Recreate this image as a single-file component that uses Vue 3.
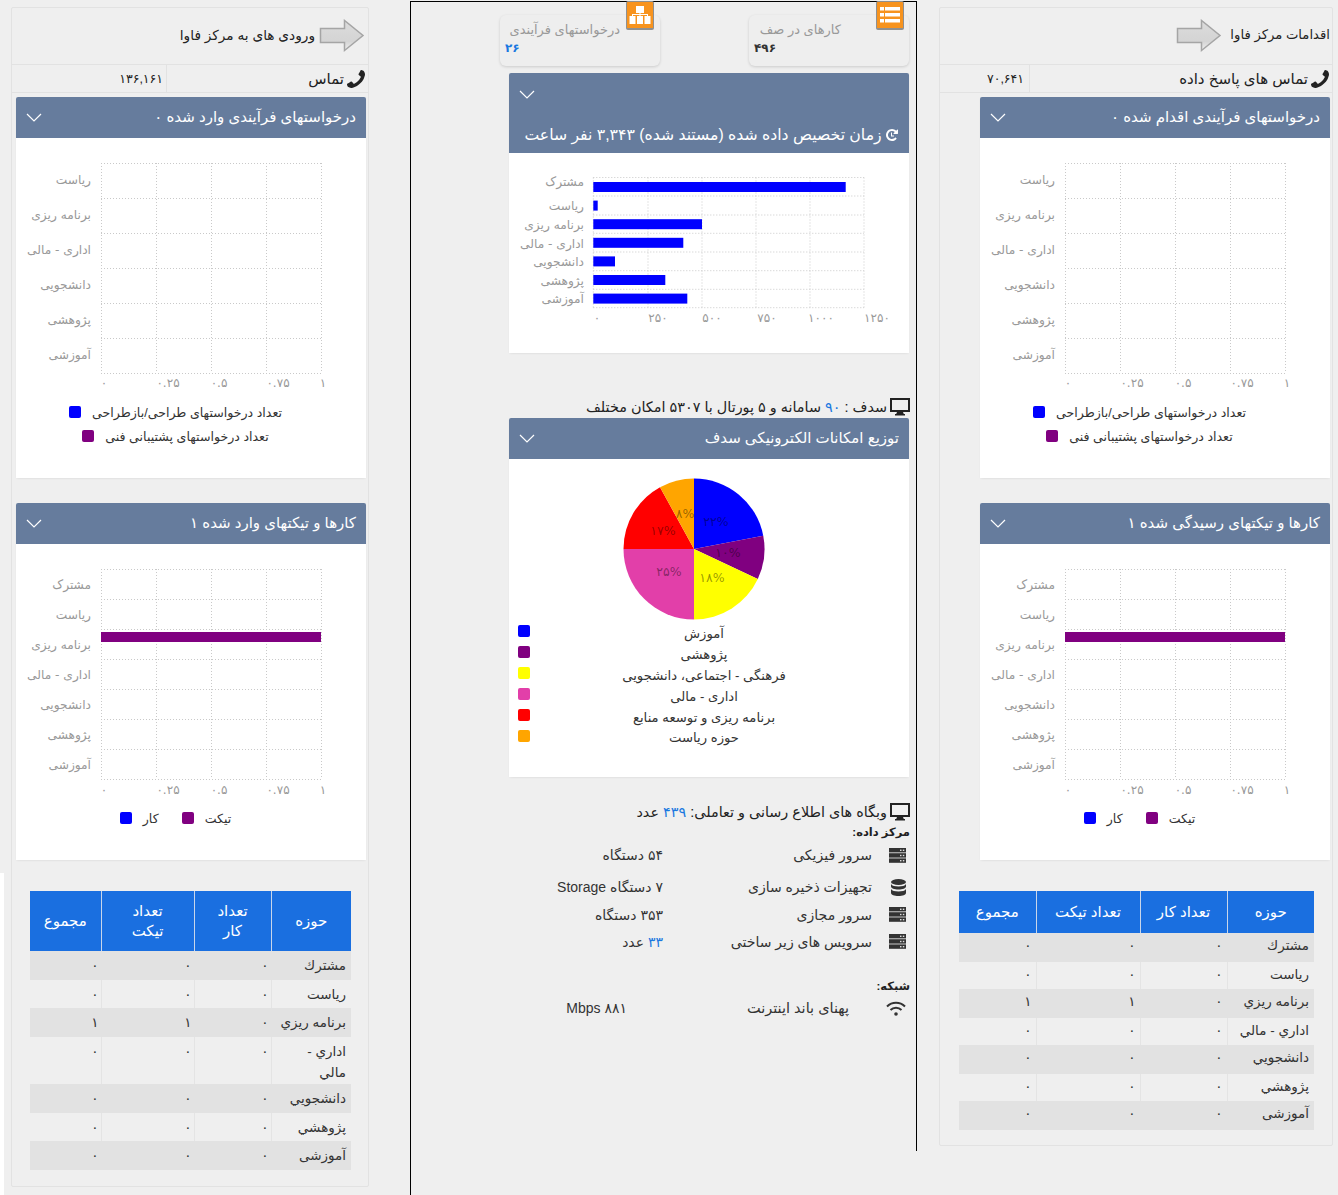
<script setup>
const fa = ['مشترک', 'ریاست', 'برنامه ریزی', 'اداری - مالی', 'دانشجویی', 'پژوهشی', 'آموزشی']
const ticksHeader = ['حوزه', 'تعداد کار', 'تعداد تیکت', 'مجموع']
const tableRows = [
  { name: 'مشترك', v: ['۰', '۰', '۰'] },
  { name: 'رياست', v: ['۰', '۰', '۰'] },
  { name: 'برنامه ريزي', v: ['۰', '۱', '۱'] },
  { name: 'اداري - مالي', v: ['۰', '۰', '۰'] },
  { name: 'دانشجويي', v: ['۰', '۰', '۰'] },
  { name: 'پژوهشي', v: ['۰', '۰', '۰'] },
  { name: 'آموزشی', v: ['۰', '۰', '۰'] }
]
const xTicks = [
  { t: '۰', x: 88 }, { t: '۰.۲۵', x: 152 }, { t: '۰.۵', x: 203 }, { t: '۰.۷۵', x: 262 }, { t: '۱', x: 307 }
]
const gridX = [85, 140, 195, 250, 305]
function range(start, step, n) {
  return Array.from({ length: n }, (_, i) => start + step * i)
}
const chartA = {
  height: 257,
  gridY: range(25, 35, 7),
  labels: fa.slice(1).map((t, i) => ({ t, y: 42 + i * 35 })),
  tickY: 245,
  bar: null,
  legend: [
    [{ c: '#0000ff', t: 'تعداد درخواستهای طراحی/بازطراحی' }],
    [{ c: '#800080', t: 'تعداد درخواستهای پشتیبانی فنی' }]
  ]
}
const chartB = {
  height: 257,
  gridY: range(25, 30, 8),
  labels: fa.map((t, i) => ({ t, y: 41 + i * 30.1 })),
  tickY: 246,
  bar: { y: 88, h: 10 },
  legend: [[{ c: '#0000ff', t: 'کار' }, { c: '#800080', t: 'تیکت' }]]
}
const sides = [
  {
    key: 'left',
    title: 'ورودی های به مرکز فاوا',
    phone: 'تماس',
    phoneValue: '۱۳۶,۱۶۱',
    cards: [
      { title: 'درخواستهای فرآیندی وارد شده ۰', chart: chartA },
      { title: 'کارها و تیکتهای وارد شده ۱', chart: chartB }
    ]
  },
  {
    key: 'right',
    title: 'اقدامات مرکز فاوا',
    phone: 'تماس های پاسخ داده',
    phoneValue: '۷۰,۶۴۱',
    cards: [
      { title: 'درخواستهای فرآیندی اقدام شده ۰', chart: chartA },
      { title: 'کارها و تیکتهای رسیدگی شده ۱', chart: chartB }
    ]
  }
]
const hBars = [
  { t: 'مشترک', w: 252.4, ly: 29 }, { t: 'ریاست', w: 4.4, ly: 53 }, { t: 'برنامه ریزی', w: 108.7, ly: 72 },
  { t: 'اداری - مالی', w: 90, ly: 91 }, { t: 'دانشجویی', w: 21.7, ly: 109 }, { t: 'پژوهشی', w: 72, ly: 128 },
  { t: 'آموزشی', w: 94, ly: 146 }
]
const hGridY = [24.5, 43, 62, 80.3, 99, 117.7, 136.3, 154.7]
const hGridX = [84.3, 139, 193, 247, 301, 355]
const hTicks = [
  { t: '۰', x: 88 }, { t: '۲۵۰', x: 149 }, { t: '۵۰۰', x: 203 }, { t: '۷۵۰', x: 258 }, { t: '۱۰۰۰', x: 312 }, { t: '۱۲۵۰', x: 368 }
]
const slices = [
  { p: 22, c: '#0000ff', lx: 22, ly: -27, lb: '۲۲%', name: 'آموزش' },
  { p: 10, c: '#800080', lx: 34, ly: 4, lb: '۱۰%', name: 'پژوهشی' },
  { p: 18, c: '#ffff00', lx: 18, ly: 29, lb: '۱۸%', name: 'فرهنگی - اجتماعی، دانشجویی' },
  { p: 25, c: '#e23fa9', lx: -25, ly: 23, lb: '۲۵%', name: 'اداری - مالی' },
  { p: 17, c: '#ff0000', lx: -31, ly: -18, lb: '۱۷%', name: 'برنامه ریزی و توسعه منابع' },
  { p: 8, c: '#ffa500', lx: -9, ly: -35, lb: '۸%', name: 'حوزه ریاست' }
]
const R = 70.5
let acc = 0
const pie = slices.map((s) => {
  const a0 = (acc / 100) * 2 * Math.PI - Math.PI / 2
  acc += s.p
  const a1 = (acc / 100) * 2 * Math.PI - Math.PI / 2
  const large = s.p > 50 ? 1 : 0
  const d = `M0 0L${R * Math.cos(a0)} ${R * Math.sin(a0)}A${R} ${R} 0 ${large} 1 ${R * Math.cos(a1)} ${R * Math.sin(a1)}Z`
  return { ...s, d }
})
const infoRows = [
  { icon: 'server', label: 'سرور فیزیکی', value: '۵۴ دستگاه', h: 'r1' },
  { icon: 'db', label: 'تجهیزات ذخیره سازی', value: '۷ دستگاه Storage', h: 'r2' },
  { icon: 'server', label: 'سرور مجازی', value: '۳۵۳ دستگاه', h: 'r3' },
  { icon: 'server', label: 'سرویس های زیر ساختی', blue: '۳۳', value: ' عدد', h: 'r3' }
]
const phonePath = 'M1408 1112q0 27-10 70.5t-21 68.5q-21 50-122 106-94 51-186 51-27 0-53-3.5t-57.5-12.5-47-14.5-55.5-20.5-49-18q-98-35-175-83-127-79-264-216t-216-264q-48-77-83-175-3-9-18-49t-20.5-55.5-14.5-47-12.5-57.5-3.5-53q0-92 51-186 56-101 106-122 25-11 68.5-21t70.5-10q14 0 21 3 18 6 53 76 11 19 30 54t35 63.5 31 53.5q3 4 17.5 25t21.5 35.5 7 28.5q0 20-28.5 50t-62 55-62 53-28.5 46q0 9 5 22.5t8.5 20.5 14 24 11.5 19q76 137 174 235t235 174q2 1 19 11.5t24 14 20.5 8.5 22.5 5q18 0 46-28.5t53-62 55-62 50-28.5q14 0 28.5 7t35.5 21.5 25 17.5q25 15 53.5 31t63.5 35 54 30q70 35 76 53 3 7 3 21z'
const historyPath = 'M1536 768q0 156-61 298t-164 245-245 164-298 61q-172 0-327-72.5T177 1259q-7-10-6.500-22.500t8.500-20.500l137-138q10-9 25-9 16 2 23 12 73 95 179 147t225 52q104 0 198.500-40.500T1131 1131t109.500-163.500T1281 768t-40.500-198.500T1131 405 967.500 295.500 769 255q-98 0-188 35.500T421 392l137 138q31 30 14 69-17 40-59 40H65q-26 0-45-19t-19-45V127q0-42 40-59 39-17 69 14l130 129q107-101 244.500-156.500T769 0q156 0 298 61t245 164 164 245 61 298zM896 480v448q0 14-9 23t-23 9H544q-14 0-23-9t-9-23v-64q0-14 9-23t23-9h224V480q0-14 9-23t23-9h64q14 0 23 9t9 23z'
</script>

<template>
  <div class="page">
    <section v-for="side in sides" :key="side.key" class="side" :class="side.key">
      <div class="side-title">
        <span class="side-text">{{ side.title }}</span>
        <svg class="arrow" width="46" height="34" viewBox="0 0 46 34">
          <defs>
            <linearGradient :id="'ag' + side.key" x1="0" y1="0" x2="0" y2="1">
              <stop offset="0" stop-color="#dcdcdc" />
              <stop offset="0.7" stop-color="#d4d4d4" />
              <stop offset="1" stop-color="#f0f0f0" />
            </linearGradient>
          </defs>
          <path d="M1.500 9.500H25.500V1.500L44 16.500 25.500 31.500V23.500H1.500Z" :fill="'url(#ag' + side.key + ')'" stroke="#a5a5a5" stroke-width="1.500" />
        </svg>
      </div>
      <div class="phone-row">
        <div class="phone-label">
          <svg class="phone-icon" width="18" height="18" viewBox="0 0 1408 1408"><path :d="phonePath" fill="#222" /></svg>
          <span>{{ side.phone }}</span>
        </div>
        <div class="phone-value">{{ side.phoneValue }}</div>
      </div>

      <article v-for="card in side.cards" :key="card.title" class="card">
        <header class="card-head">
          <span class="card-title">{{ card.title }}</span>
          <svg class="chev" width="16" height="9" viewBox="0 0 16 9"><path d="M1 1l7 7 7-7" fill="none" stroke="#fff" stroke-width="1.200" /></svg>
        </header>
        <div class="card-body">
          <svg class="chart" width="350" :height="card.chart.height" :viewBox="`0 0 350 ${card.chart.height}`">
            <line v-for="x in gridX" :key="'x' + x" :x1="x + 0.5" :x2="x + 0.5" :y1="card.chart.gridY[0]" :y2="card.chart.gridY[card.chart.gridY.length - 1]" class="grid" />
            <line v-for="y in card.chart.gridY" :key="'y' + y" x1="85" x2="305" :y1="y + 0.5" :y2="y + 0.5" class="grid" />
            <rect v-if="card.chart.bar" x="85" :y="card.chart.bar.y" width="220" :height="card.chart.bar.h" fill="#800080" />
            <text v-for="l in card.chart.labels" :key="l.t" x="75" :y="l.y" class="axis" text-anchor="end" dominant-baseline="middle">{{ l.t }}</text>
            <text v-for="t in xTicks" :key="t.t" :x="t.x" :y="card.chart.tickY" class="axis tick" text-anchor="middle" dominant-baseline="middle">{{ t.t }}</text>
          </svg>
          <div class="legend" :class="{ single: card.chart.legend.length === 1 }">
            <div v-for="(row, i) in card.chart.legend" :key="i" class="legend-row">
              <span v-for="it in row" :key="it.t" class="legend-item">
                <i class="swatch" :style="{ background: it.c }"></i>
                <span>{{ it.t }}</span>
              </span>
            </div>
          </div>
        </div>
      </article>

      <table class="data">
        <thead>
          <tr><th v-for="h in ticksHeader" :key="h">{{ h }}</th></tr>
        </thead>
        <tbody>
          <tr v-for="r in tableRows" :key="r.name">
            <td class="name">{{ r.name }}</td>
            <td v-for="(v, i) in r.v" :key="i">{{ v }}</td>
          </tr>
        </tbody>
      </table>
    </section>

    <main class="center">
      <div class="center-inner">
        <div class="stats">
          <div class="stat">
            <div class="stat-badge b1">
              <svg width="22" height="20" viewBox="0 0 22 20" fill="#fff">
                <rect x="7" y="1" width="8" height="7" />
                <rect x="0.500" y="11" width="6" height="8" />
                <rect x="8" y="11" width="6" height="8" />
                <rect x="15.500" y="11" width="6" height="8" />
                <path d="M3 11V9h16v2h-1V10H4v1zM10.500 8h1v3h-1z" />
              </svg>
            </div>
            <div class="stat-title t1">درخواستهای فرآیندی</div>
            <div class="stat-value blue">۲۶</div>
          </div>
          <div class="stat">
            <div class="stat-badge">
              <svg width="20" height="18" viewBox="0 0 20 18" fill="#fff">
                <rect x="0" y="1" width="4" height="3.500" /><rect x="5" y="1" width="15" height="3.500" />
                <rect x="0" y="7" width="4" height="3.500" /><rect x="5" y="7" width="15" height="3.500" />
                <rect x="0" y="13" width="4" height="3.500" /><rect x="5" y="13" width="15" height="3.500" />
              </svg>
            </div>
            <div class="stat-title t2">کارهای در صف</div>
            <div class="stat-value">۴۹۶</div>
          </div>
        </div>

        <article class="card wide">
          <header class="card-head tall">
            <svg class="chev" width="16" height="9" viewBox="0 0 16 9"><path d="M1 1l7 7 7-7" fill="none" stroke="#fff" stroke-width="1.200" /></svg>
            <div class="card-title tall-title">
              <svg class="hist" width="12" height="12" viewBox="0 0 1536 1536"><path :d="historyPath" fill="#fff" /></svg>
              زمان تخصیص داده شده (مستند شده) ۳,۳۴۳ نفر ساعت
            </div>
          </header>
          <div class="card-body h200">
            <svg class="chart" width="400" height="200" viewBox="0 0 400 200">
              <line v-for="x in hGridX" :key="x" :x1="x" :x2="x" y1="24.500" y2="154.700" class="grid" />
              <line v-for="y in hGridY" :key="y" x1="84.300" x2="355" :y1="y" :y2="y" class="grid" />
              <rect v-for="(b, i) in hBars" :key="b.t" x="84.300" :y="29 + i * 18.600" :width="b.w" height="10" fill="#0000ff" />
              <text v-for="b in hBars" :key="b.t + 'l'" x="75" :y="b.ly" class="axis" text-anchor="end" dominant-baseline="middle">{{ b.t }}</text>
              <text v-for="t in hTicks" :key="t.t" :x="t.x" y="165" class="axis tick" text-anchor="middle" dominant-baseline="middle">{{ t.t }}</text>
            </svg>
          </div>
        </article>

        <div class="line sadaf">
          <svg class="mon" width="20" height="18" viewBox="0 0 20 18"><path d="M1 1h18v12H1z" fill="none" stroke="#222" stroke-width="2" /><path d="M7 14h6l1 2.500H6zM5 16h10v1.500H5z" fill="#222" /></svg>
          <span>سدف : <b class="blue">۹۰</b> سامانه و ۵ پورتال با ۵۳۰۷ امکان مختلف</span>
        </div>

        <article class="card wide">
          <header class="card-head">
            <span class="card-title">توزیع امکانات الکترونیکی سدف</span>
            <svg class="chev" width="16" height="9" viewBox="0 0 16 9"><path d="M1 1l7 7 7-7" fill="none" stroke="#fff" stroke-width="1.200" /></svg>
          </header>
          <div class="card-body h318">
            <svg class="pie" width="142" height="142" viewBox="-71 -71 142 142">
              <path v-for="s in pie" :key="s.c" :d="s.d" :fill="s.c" />
              <text v-for="s in pie" :key="s.lb" :x="s.lx" :y="s.ly" class="pie-label" text-anchor="middle" dominant-baseline="middle">{{ s.lb }}</text>
            </svg>
            <ul class="pie-legend">
              <li v-for="s in slices" :key="s.name">
                <i class="swatch" :style="{ background: s.c }"></i>
                <span>{{ s.name }}</span>
              </li>
            </ul>
          </div>
        </article>

        <div class="info">
          <div class="line site">
            <svg class="mon" width="20" height="18" viewBox="0 0 20 18"><path d="M1 1h18v12H1z" fill="none" stroke="#222" stroke-width="2" /><path d="M7 14h6l1 2.500H6zM5 16h10v1.500H5z" fill="#222" /></svg>
            <span>وبگاه های اطلاع رسانی و تعاملی: <b class="blue">۴۳۹</b> عدد</span>
          </div>
          <div class="info-head">مرکز داده:</div>
          <div v-for="r in infoRows" :key="r.label" class="info-row" :class="r.h">
            <span class="info-icon">
              <svg v-if="r.icon === 'server'" width="17" height="15" viewBox="0 0 17 15">
                <g v-for="y in [0, 5.200, 10.400]" :key="y">
                  <rect :y="y" width="17" height="4.400" fill="#333" />
                  <rect x="11" :y="y + 1.600" width="1.500" height="1.400" fill="#ddd" />
                  <rect x="13.800" :y="y + 1.600" width="1.500" height="1.400" fill="#ddd" />
                </g>
              </svg>
              <svg v-else width="15" height="17" viewBox="0 0 15 17" fill="#333">
                <ellipse cx="7.500" cy="3" rx="7.500" ry="3" />
                <path d="M0 5c1 1.800 4 2.500 7.500 2.500S14 6.800 15 5v2.500c0 1.700-3.400 3-7.500 3S0 9.200 0 7.500z" />
                <path d="M0 10c1 1.800 4 2.500 7.500 2.500S14 11.800 15 10v4c0 1.700-3.400 3-7.500 3S0 15.700 0 14z" />
              </svg>
            </span>
            <span class="info-label">{{ r.label }}</span>
            <span class="info-value"><b v-if="r.blue" class="blue">{{ r.blue }}</b>{{ r.value }}</span>
          </div>
          <div class="info-head net">شبکه:</div>
          <div class="info-row netrow">
            <span class="info-icon">
              <svg width="20" height="15" viewBox="0 0 20 15" fill="none" stroke="#333" stroke-width="2">
                <path d="M1 5.500C6 .5 14 .5 19 5.500" />
                <path d="M4.500 9C7.500 6 12.500 6 15.500 9" />
                <circle cx="10" cy="13" r="1.800" fill="#333" stroke="none" />
              </svg>
            </span>
            <span class="info-label">پهنای باند اینترنت</span>
            <span class="info-value">۸۸۱ Mbps</span>
          </div>
        </div>
      </div>
    </main>
  </div>
</template>

<style>
html, body { margin: 0; background: #efefef; }
</style>

<style scoped>
.page {
  position: relative;
  display: flex;
  align-items: flex-start;
  width: 1338px;
  height: 1195px;
  overflow: hidden;
  background: #efefef;
  color: #333;
  font-family: "Liberation Sans", "DejaVu Sans", sans-serif;
  font-size: 13px;
}
.page::before {
  content: "";
  position: absolute;
  left: 0;
  top: 873px;
  bottom: 0;
  width: 4px;
  background: #fff;
}
.side {
  box-sizing: border-box;
  margin-top: 7px;
  border: 1px solid #e2e2e2;
  border-radius: 2px;
  display: flex;
  flex-direction: column;
  align-items: flex-end;
}
.side > * { flex: none; }
.left { order: 1; width: 358px; margin-left: 11px; height: 1180px; padding-right: 2px; }
.right { order: 3; width: 394px; margin-left: 22px; height: 1139px; padding-right: 2px; }
.center { order: 2; margin-left: 41px; }

.side-title {
  height: 56px;
  display: flex;
  align-items: center;
  gap: 4px;
  direction: ltr;
  font-size: 13.700px;
  color: #222;
}
.side-text { margin-bottom: 3px; }
.left .side-title { padding-right: 1px; }
.left .side-text { order: 1; }
.left .arrow { order: 2; }
.right .side-title { flex-direction: row-reverse; gap: 8px; font-size: 13.200px; }

.phone-row {
  box-sizing: border-box;
  align-self: stretch;
  margin-right: -2px;
  height: 29px;
  display: flex;
  direction: rtl;
  border-top: 1px solid #e2e2e2;
  border-bottom: 1px solid #e2e2e2;
  align-items: stretch;
  font-size: 15px;
}
.phone-label {
  flex: 1;
  display: flex;
  align-items: center;
  gap: 3px;
  padding-right: 3px;
  border-left: 1px solid #e2e2e2;
  color: #222;
}
.phone-icon { transform: scaleX(-1); }
.phone-value {
  box-sizing: border-box;
  display: flex;
  align-items: center;
  justify-content: flex-start;
  padding-right: 3px;
  width: 154px;
  color: #222;
  font-size: 12.500px;
}
.right .phone-value { width: 89px; padding-right: 5px; }

.card { width: 350px; margin-top: 4px; background: #fff; border-radius: 3px; box-shadow: 0 1px 2px rgba(0, 0, 0, .06); direction: ltr; }
.side .card + .card { margin-top: 25px; }
.side .card:nth-of-type(1) { margin-top: 4px; }
.card-head {
  height: 41px;
  background: #667c9d;
  display: flex;
  align-items: center;
  justify-content: space-between;
  flex-direction: row-reverse;
  padding: 0 10px;
  color: #fff;
  border-radius: 2px 2px 0 0;
}
.card-title { direction: rtl; font-size: 15px; margin-bottom: 2px; }
.chev { display: block; }
.card-body { background: #fff; position: relative; }
.side .card:nth-of-type(1) .card-body { height: 340px; }
.side .card:nth-of-type(2) .card-body { height: 316px; }
.chart { display: block; }
.grid { stroke: #c9c9c9; stroke-width: 1; stroke-dasharray: 1 2; }
.axis { fill: #999; font-size: 12.200px; font-family: "DejaVu Sans", sans-serif; }
.tick { font-size: 12px; }
.legend { padding-right: 31px; margin-top: 5px; }
.legend-row { display: flex; justify-content: center; gap: 23px; height: 24px; align-items: center; }
.legend-item { display: flex; align-items: center; gap: 11px; direction: rtl; flex-direction: row-reverse; color: #333; font-size: 12.600px; }
.swatch { display: block; width: 12px; height: 12px; border-radius: 2px; flex: none; }

.data {
  margin-top: 31px;
  border-collapse: collapse;
  direction: rtl;
  table-layout: fixed;
  font-size: 13.500px;
  color: #333;
}
.left .data { width: 321px; margin-right: 15px; }
.right .data { width: 355px; margin-right: 16px; }
.data th {
  background: #1a6fe0;
  color: #fff;
  font-weight: 400;
  font-size: 15px;
  line-height: 20px;
  border-left: 1px solid #c9d6ea;
  text-align: center;
  padding: 0 15px;
  box-sizing: border-box;
}
.data th:last-child { border-left: 0; padding: 0 4px; }
.left .data thead tr { height: 60px; }
.right .data thead tr { height: 42px; }
.left th:nth-child(1) { width: 80px; }
.left th:nth-child(2) { width: 77px; }
.left th:nth-child(3) { width: 93px; }
.right th:nth-child(1) { width: 87px; }
.right th:nth-child(2) { width: 87px; }
.right th:nth-child(3) { width: 104px; }
.data td {
  vertical-align: top;
  text-align: right;
  padding: 2px 4px 0;
  line-height: 21px;
  border-left: 1px solid #e4e4e4;
  box-sizing: border-box;
  height: 27px;
}
.left .data td { padding-right: 2px; padding-top: 4px; padding-bottom: 1.500px; height: 27.500px; }
.data td:last-child { border-left: 0; }
.data td.name { padding-right: 5px; }
.left .data td.name { padding-right: 5px; padding-left: 8px; }
.data tbody tr:nth-child(odd) td { background: #e2e2e2; border-left-color: #e2e2e2; height: 29px; }

.center {
  box-sizing: border-box;
  width: 507px;
  height: 1194px;
  margin-top: 1px;
  border-left: 1px solid #000;
  border-top: 1px solid #000;
}
.center-inner {
  box-sizing: border-box;
  height: 1149px;
  border-right: 1px solid #000;
  padding-left: 98px;
  padding-right: 6px;
  direction: ltr;
}
.stats {
  display: flex;
  margin-left: -9px;
  justify-content: space-between;
  padding-top: 13px;
  margin-right: 1px;
}
.stat {
  position: relative;
  box-sizing: border-box;
  width: 160px;
  height: 51px;
  background: #eeeeee;
  border-radius: 6px;
  box-shadow: 0 1px 3px rgba(0, 0, 0, .15);
  padding: 6px 5px 0;
}
.stat-badge {
  position: absolute;
  top: -14px;
  right: 5px;
  width: 28px;
  height: 29px;
  box-sizing: border-box;
  background: #f7931e;
  border: 1px solid #8f8f8f;
  border-bottom-width: 2px;
  border-radius: 2px;
  display: flex;
  align-items: center;
  justify-content: center;
}
.stat-badge.b1 { right: 6px; }
.stat-title { direction: rtl; color: #999; font-size: 13px; line-height: 18px; }
.t1 { margin-right: 35px; }
.t2 { margin-right: 63px; }
.stat-value { font-weight: 700; color: #333; font-size: 12px; line-height: 18px; text-align: left; }
.blue { color: #1a78e0; font-weight: 400; }
.stat-value.blue { font-weight: 700; }

.wide { width: 400px; margin-top: 7px; }
.tall { height: 80px; display: block; padding: 0; position: relative; }
.tall .chev { position: absolute; left: 10px; top: 17px; }
.tall-title { position: absolute; right: 11px; top: 52px; white-space: nowrap; font-size: 15.700px; }
.hist { transform: scaleX(-1); vertical-align: -1px; }
.h200 { height: 200px; }
.h318 { height: 318px; overflow: hidden; }
.line {
  display: flex;
  justify-content: flex-end;
  flex-direction: row;
  align-items: center;
  gap: 3px;
  direction: rtl;
  font-size: 14.400px;
  color: #222;
}
.line.sadaf { margin-top: 44px; height: 20px; }
.wide + .line + .wide { margin-top: 1px; }
.line.sadaf, .line.site { justify-content: flex-start; }
.mon { flex: none; }
.pie { display: block; margin: 19px 0 0 114px; }
.pie-label { fill: #000; fill-opacity: .42; font-size: 12.500px; font-family: "DejaVu Sans", sans-serif; }
.pie-legend { list-style: none; margin: 1px 0 0; padding: 0 0 0 9px; }
.pie-legend li { display: flex; align-items: center; height: 20.900px; direction: ltr; }
.pie-legend span { flex: 1; text-align: center; padding: 4px 31px 0 0; direction: rtl; font-size: 13.200px; color: #333; }

.info { direction: rtl; margin-top: 24px; }
.info-head { font-weight: 700; font-size: 11.500px; line-height: 18px; color: #222; }
.line.site { height: 22px; }
.info-row { display: grid; grid-template-columns: 38px 209px 1fr; align-items: center; font-size: 14px; color: #333; box-sizing: border-box; }
.info-icon { display: flex; padding-right: 4px; }
.info-value { text-align: right; }
.r1 { height: 28px; }
.r2 { height: 32px; padding-top: 4px; }
.r3 { height: 27px; }
.info-head.net { margin-top: 22px; }
.netrow { grid-template-columns: 61px 222px 1fr; height: 26px; }
.netrow .info-label { font-size: 14.500px; }
</style>
